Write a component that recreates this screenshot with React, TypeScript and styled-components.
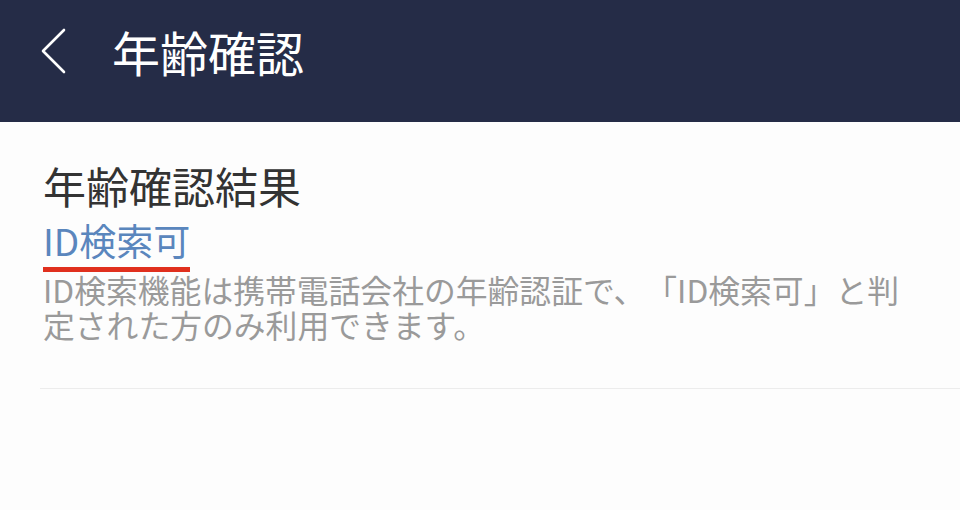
import styled, { createGlobalStyle } from "styled-components";

const GlobalStyle = createGlobalStyle`
    html, body {
        margin: 0;
        padding: 0;
        background: #fdfdfd;
    }
    body {
        font-family: "Noto Sans CJK JP", "Noto Sans", sans-serif;
    }
`

const Page = styled.div`
    width: 960px;
    height: 510px;
    background: #fdfdfd;
    overflow: hidden;
`

const Header = styled.header`
    height: 122px;
    background: #252c47;
    display: flex;
    align-items: center;
    padding: 0 0 20px 40px;
    box-sizing: border-box;
`

const BackButton = styled.button`
    width: 30px;
    height: 48px;
    padding: 0;
    border: none;
    background: none;
    display: flex;
    align-items: center;
    cursor: pointer;
`

const Title = styled.h1`
    margin: 0 0 0 42px;
    font-size: 48px;
    font-weight: 400;
    color: #ffffff;
    line-height: 1;
`

const Section = styled.section`
    padding: 38px 43px 0 43px;
`

const Heading = styled.h2`
    margin: 0;
    font-size: 43px;
    font-weight: 400;
    color: #333333;
    line-height: 1.2;
`

const Status = styled.div`
    display: inline-block;
    margin-top: 8px;
    font-size: 37px;
    line-height: 1.1;
    color: #5a86bd;
    border-bottom: 5px solid #e0301e;
    padding-bottom: 7px;
`

const Note = styled.p`
    margin: 0;
    font-size: 31.8px;
    line-height: 35px;
    color: #9a9a9a;
    text-spacing-trim: space-all;
`

const Divider = styled.hr`
    margin: 46px 0 0 40px;
    border: none;
    border-top: 1px solid #ececec;
`

const ChevronLeft = () => (
    <svg width="26" height="46" viewBox="0 0 26 46" fill="none">
        <path d="M24 2 L3 23 L24 44" stroke="#ffffff" strokeWidth="2.6" strokeLinecap="round" strokeLinejoin="round" />
    </svg>
)

const App = () => {
    return (
        <Page>
            <GlobalStyle />
            <Header>
                <BackButton aria-label="戻る">
                    <ChevronLeft />
                </BackButton>
                <Title>年齢確認</Title>
            </Header>
            <Section>
                <Heading>年齢確認結果</Heading>
                <Status>ID検索可</Status>
                <Note>ID検索機能は携帯電話会社の年齢認証で、「ID検索可」と判定された方のみ利用できます。</Note>
            </Section>
            <Divider />
        </Page>
    );
}

export default App;
